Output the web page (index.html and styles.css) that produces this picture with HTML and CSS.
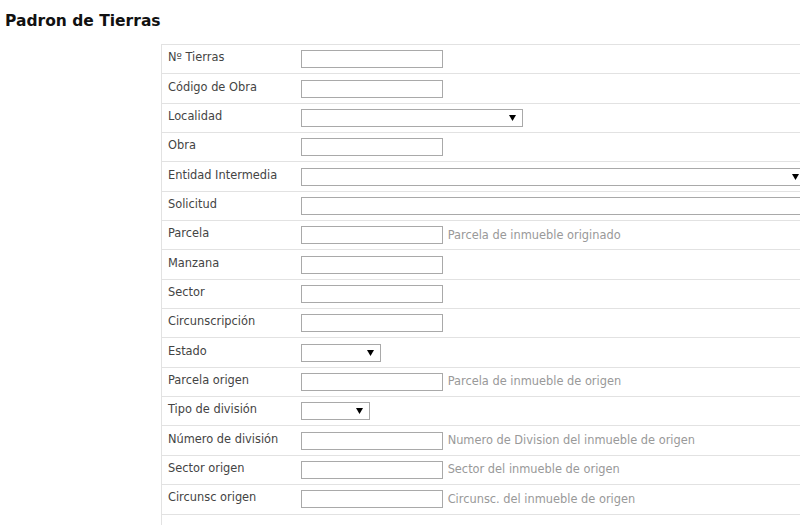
FILE: index.html
```html
<!DOCTYPE html>
<html lang="es">
<head>
  <meta charset="UTF-8" />
  <title>Padron de Tierras</title>
  <link rel="stylesheet" href="styles.css">
</head>
<body>
  <h2 class="page-title">Padron de Tierras</h2>

  <div class="form-wrap">
    <table class="form-table">
      <tr>
        <td class="lbl">Nº Tierras</td>
        <td><input type="text" class="txt" /></td>
      </tr>
      <tr>
        <td class="lbl">Código de Obra</td>
        <td><input type="text" class="txt" /></td>
      </tr>
      <tr>
        <td class="lbl">Localidad</td>
        <td><select class="sel sel-md"><option></option></select></td>
      </tr>
      <tr>
        <td class="lbl">Obra</td>
        <td><input type="text" class="txt" /></td>
      </tr>
      <tr>
        <td class="lbl">Entidad Intermedia</td>
        <td><select class="sel sel-wide"><option></option></select></td>
      </tr>
      <tr>
        <td class="lbl">Solicitud</td>
        <td><input type="text" class="txt txt-wide" /></td>
      </tr>
      <tr>
        <td class="lbl">Parcela</td>
        <td><input type="text" class="txt" /> <span class="hint">Parcela de inmueble originado</span></td>
      </tr>
      <tr>
        <td class="lbl">Manzana</td>
        <td><input type="text" class="txt" /></td>
      </tr>
      <tr>
        <td class="lbl">Sector</td>
        <td><input type="text" class="txt" /></td>
      </tr>
      <tr>
        <td class="lbl">Circunscripción</td>
        <td><input type="text" class="txt" /></td>
      </tr>
      <tr>
        <td class="lbl">Estado</td>
        <td><select class="sel sel-sm"><option></option></select></td>
      </tr>
      <tr>
        <td class="lbl">Parcela origen</td>
        <td><input type="text" class="txt" /> <span class="hint">Parcela de inmueble de origen</span></td>
      </tr>
      <tr>
        <td class="lbl">Tipo de división</td>
        <td><select class="sel sel-xs"><option></option></select></td>
      </tr>
      <tr>
        <td class="lbl">Número de división</td>
        <td><input type="text" class="txt" /> <span class="hint">Numero de Division del inmueble de origen</span></td>
      </tr>
      <tr>
        <td class="lbl">Sector origen</td>
        <td><input type="text" class="txt" /> <span class="hint">Sector del inmueble de origen</span></td>
      </tr>
      <tr>
        <td class="lbl">Circunsc origen</td>
        <td><input type="text" class="txt" /> <span class="hint">Circunsc. del inmueble de origen</span></td>
      </tr>
      <tr class="actions">
        <td colspan="2"><span class="action-link">Buscar</span></td>
      </tr>
    </table>
  </div>
</body>
</html>
```

FILE: styles.css
```css
html, body {
  margin: 0;
  padding: 0;
  background: #fff;
  overflow: hidden;
  font-family: 'DejaVu Sans', Verdana, sans-serif;
  color: #444;
}

.page-title {
  font-size: 15.5px;
  font-weight: bold;
  color: #111;
  margin: 0;
  padding: 12px 5px 0;
  height: 32px;
  box-sizing: border-box;
  white-space: nowrap;
}

.form-wrap {
  padding: 12px 0 0 161px;
  width: 900px;
}

.form-table {
  border-collapse: collapse;
  width: 700px;
  font-size: 11.4px;
  border-left: 1px solid #e2e2e2;
  border-top: 1px solid #e2e2e2;
}

.form-table tr {
  height: 29.35px;
  border-bottom: 1px solid #e2e2e2;
}

.form-table td {
  padding: 0 0 0 6px;
  vertical-align: middle;
  white-space: nowrap;
}

.form-table td.lbl {
  width: 127px;
  padding-bottom: 4px;
}

.txt {
  width: 142px;
  height: 18px;
  box-sizing: border-box;
  border: 1px solid #a9a9a9;
  margin: 0;
  padding: 0 2px;
  font: inherit;
  vertical-align: middle;
}

.txt-wide {
  width: 520px;
}

.sel {
  appearance: none;
  -webkit-appearance: none;
  height: 18px;
  box-sizing: border-box;
  border: 1px solid #a9a9a9;
  border-radius: 0;
  margin: 0;
  font: inherit;
  vertical-align: middle;
  background: #fff url("data:image/svg+xml,%3Csvg xmlns='http://www.w3.org/2000/svg' width='7' height='6'%3E%3Cpath d='M0 0h7L3.5 6z' fill='%23000'/%3E%3C/svg%3E") no-repeat right 6px center;
}

.sel-md { width: 222px; }
.sel-wide { width: 505px; }
.sel-sm { width: 80px; }
.sel-xs { width: 69px; }

.hint {
  color: #999;
  margin-left: 1px;
}

.form-table tr.actions {
  border-bottom: none;
}

.action-link {
  display: inline-block;
  margin-left: 600px;
  padding-top: 8px;
  color: #333;
}
```
